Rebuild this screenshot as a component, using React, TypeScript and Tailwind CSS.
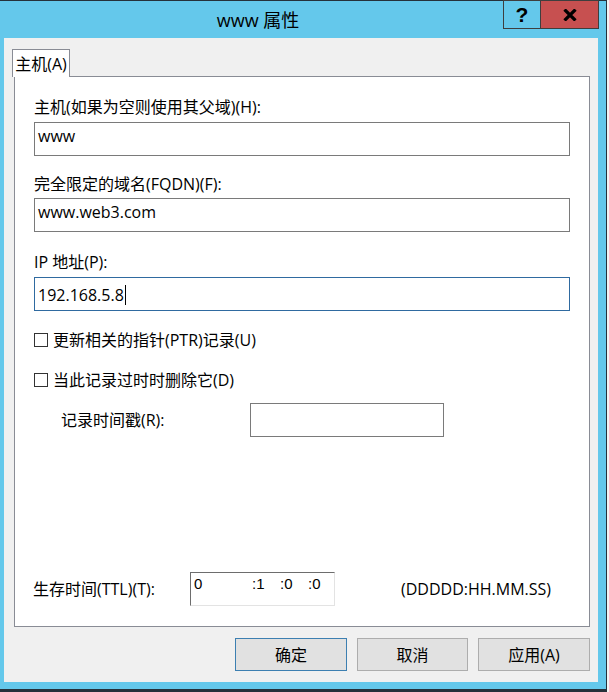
const ui = { fontFamily: '"Open Sans", "Noto Sans CJK SC", sans-serif' };

function Field({ value, active = false }: { value: string; active?: boolean }) {
  return (
    <div
      className={`h-[34px] w-[536px] border bg-white pl-[3px] pt-[3px] text-[16px] leading-[20px] text-black ${
        active ? 'border-[#2f6aa0]' : 'border-[#7a7a7a]'
      }`}
    >
      <span>{value}</span>
      {active && <span className="ml-[1px] inline-block h-[20px] w-[1px] translate-y-[4px] bg-black" />}
    </div>
  );
}

function Check({ label, className = '' }: { label: string; className?: string }) {
  return (
    <div className={`flex h-[20px] items-center ${className}`}>
      <span className="h-[14px] w-[14px] border border-[#333] bg-white" />
      <span className="ml-[5px] text-[16px] leading-[20px]">{label}</span>
    </div>
  );
}

export default function App() {
  return (
    <div className="h-[692px] w-[609px] overflow-hidden bg-[#f4f4f4]" style={ui}>
      <div className="relative flex h-[692px] w-[607px] flex-col border-b-[3px] border-r border-t border-[#25313a] bg-[#64c8eb]">
        {/* caption buttons */}
        <div className="absolute right-[7px] top-[-1px] flex h-[29px]">
          <div className="flex w-[37px] items-center justify-center border border-r-0 border-[#3e3e3e] bg-[#64c8eb]">
            <span
              className="text-[21px] font-bold leading-none text-black"
              style={{ fontFamily: '"Liberation Sans", sans-serif' }}
            >
              ?
            </span>
          </div>
          <div className="flex w-[59px] items-center justify-center border border-[#3e3e3e] bg-[#c75050]">
            <svg width="14" height="12" viewBox="0 0 14 12">
              <path d="M1.5 0.5 L12.5 11.5 M12.5 0.5 L1.5 11.5" stroke="#000" strokeWidth="3.2" />
            </svg>
          </div>
        </div>

        {/* title */}
        <div className="flex h-[37px] w-[516px] items-center justify-center pt-[2px] text-[18px] text-black">
          www 属性
        </div>

        {/* client */}
        <div className="ml-[4px] flex h-[644px] w-[594px] flex-col bg-[#f0f0f0] pl-[10px] pt-[11px]">
          <div className="relative z-10 -mb-[1px] -ml-[2px] flex h-[28px] w-[58px] items-center justify-center border border-b-0 border-[#898c95] bg-white text-[16px]">
            主机(A)
          </div>

          <div className="flex h-[551px] w-[576px] flex-col border border-[#898c95] bg-white px-[19px] pb-[20px] pt-[20px] text-black">
            <div className="h-[20px] text-[16px] leading-[20px]">主机(如果为空则使用其父域)(H):</div>
            <div className="mt-[5px]">
              <Field value="www" />
            </div>

            <div className="mt-[18px] h-[20px] text-[16px] leading-[20px]">完全限定的域名(FQDN)(F):</div>
            <div className="mt-[4px]">
              <Field value="www.web3.com" />
            </div>

            <div className="mt-[20px] h-[20px] text-[16px] leading-[20px]">IP 地址(P):</div>
            <div className="mt-[5px]">
              <Field value="192.168.5.8" active />
            </div>

            <Check label="更新相关的指针(PTR)记录(U)" className="mt-[19px]" />
            <Check label="当此记录过时时删除它(D)" className="mt-[20px]" />

            <div className="mt-[13px] flex h-[34px] items-center">
              <span className="ml-[27px] w-[189px] text-[16px] leading-[20px]">记录时间戳(R):</span>
              <span className="h-[34px] w-[194px] border border-[#7a7a7a] bg-white" />
            </div>

            <div className="flex-1" />

            <div className="flex h-[34px] items-center">
              <span className="-ml-[1px] w-[157px] text-[16px] leading-[20px]">生存时间(TTL)(T):</span>
              <div
                className="flex h-[34px] w-[145px] items-start border-b border-l border-r border-t border-b-[#e3e3e3] border-l-[#6d6d6d] border-r-[#e3e3e3] border-t-[#6d6d6d] bg-white pl-[3px] pt-[2px] text-[15px] leading-[18px]"
                style={{ fontFamily: '"Liberation Sans", sans-serif' }}
              >
                <span className="w-[58px]">0</span>
                <span className="w-[28px]">:1</span>
                <span className="w-[28px]">:0</span>
                <span>:0</span>
              </div>
              <span className="ml-[66px] text-[16px] leading-[20px]">(DDDDD:HH.MM.SS)</span>
            </div>
          </div>

          <div className="mt-[11px] flex w-[576px] justify-end gap-[10px] text-[16px] text-black">
            <button className="h-[33px] w-[112px] border border-[#3c7fb1] bg-[#e1e1e1]">确定</button>
            <button className="h-[33px] w-[111px] border border-[#adadad] bg-[#e1e1e1]">取消</button>
            <button className="h-[33px] w-[112px] border border-[#adadad] bg-[#e1e1e1]">应用(A)</button>
          </div>
        </div>
      </div>
    </div>
  );
}
